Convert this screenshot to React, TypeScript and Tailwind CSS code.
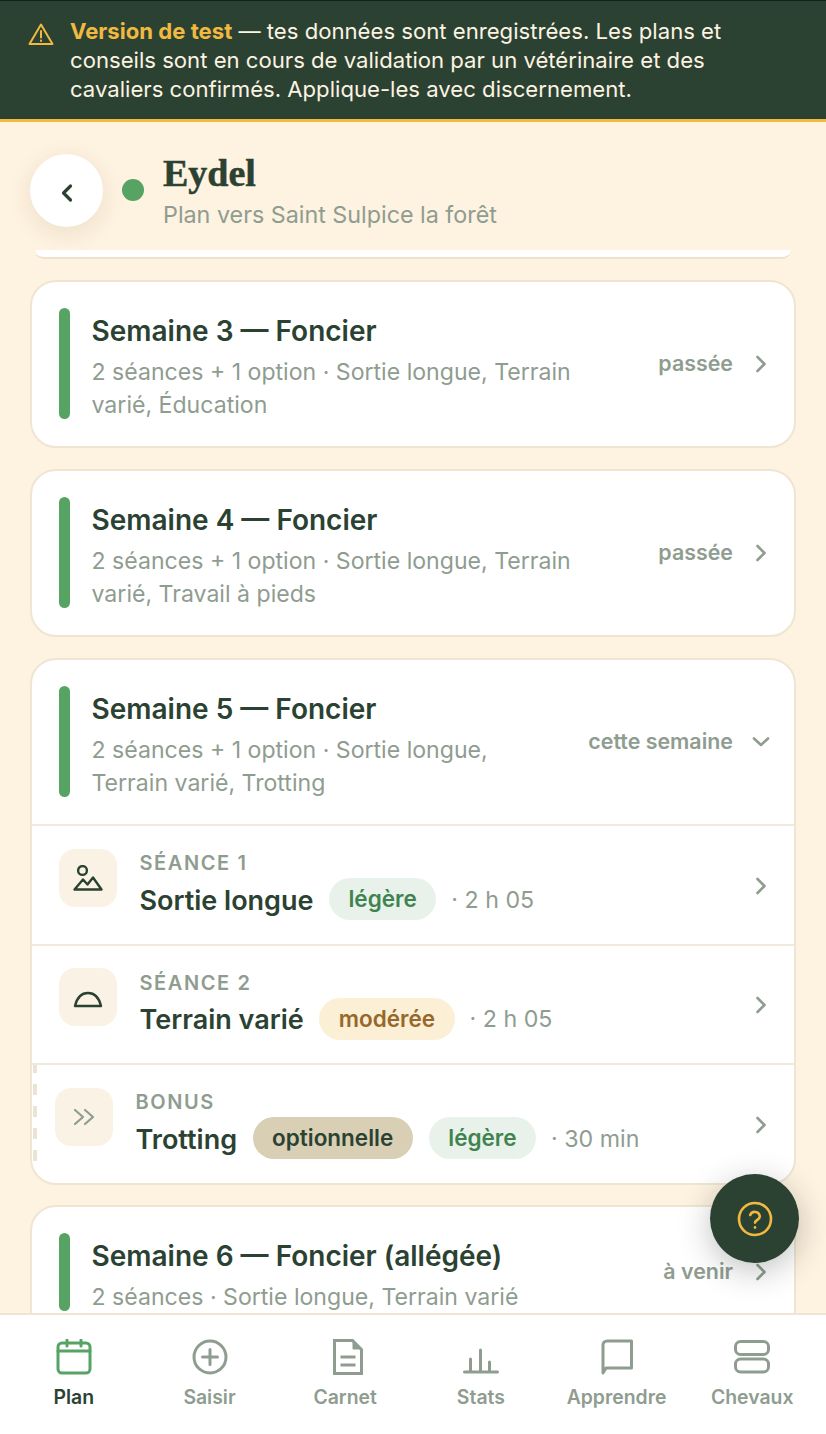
import React from "react";

function Chevron({ down = false, className = "" }: { down?: boolean; className?: string }) {
  return down ? (
    <svg className={className} width="20" height="20" viewBox="0 0 20 20" fill="none" stroke="#8f9c90" strokeWidth="2.6" strokeLinecap="round" strokeLinejoin="round"><path d="M3 6.5 10 13 17 6.5" /></svg>
  ) : (
    <svg className={className} width="20" height="20" viewBox="0 0 20 20" fill="none" stroke="#8f9c90" strokeWidth="2.6" strokeLinecap="round" strokeLinejoin="round"><path d="M6.5 3 13.5 10 6.5 17" /></svg>
  );
}

function WeekHeader({ title, sub, status, down = false }: { title: string; sub: React.ReactNode; status: string; down?: boolean }) {
  return (
    <div className="flex items-center pl-[27px] pr-[23px] pt-[26px] pb-[27px]">
      <div className="w-[11px] self-stretch rounded-full bg-[#57a364] shrink-0" />
      <div className="ml-[21.5px] flex-1 min-w-0 pt-[6px] -mb-[3px]">
        <div className="text-[28px] leading-[34px] font-semibold text-[#2b4232]">{title}</div>
        <div className="mt-[8px] text-[23.1px] leading-[33px] text-[#8f9c90]">{sub}</div>
      </div>
      <div className="text-[21.4px] font-semibold text-[#8f9c90] shrink-0 mr-[18px]">{status}</div>
      <Chevron down={down} />
    </div>
  );
}

function Pill({ children, tone }: { children: React.ReactNode; tone: "green" | "amber" | "tan" }) {
  const c = tone === "green" ? "bg-[#e8f2ea] text-[#3f8350]" : tone === "amber" ? "bg-[#fbefd6] text-[#96682a]" : "bg-[#d8cfb4] text-[#2b4232]";
  return <span className={`h-[42px] px-[19.5px] rounded-full flex items-center text-[22.5px] font-semibold ${c}`}>{children}</span>;
}

function Session({ icon, label, name, pills, time, bonus = false }: { icon: React.ReactNode; label: string; name: string; pills: React.ReactNode; time: string; bonus?: boolean }) {
  return (
    <div className="relative flex items-center h-[119.5px] border-t-2 border-[#f0eadc] pr-[23px]">
      {bonus && <div className="absolute left-[1px] top-0 h-[99px] w-[4px] bg-[repeating-linear-gradient(to_bottom,#ece4d2_-3px,#ece4d2_8px,transparent_8px,transparent_19px)]" />}
      <div className={`${bonus ? "ml-[23px]" : "ml-[27px]"} -mt-[14px] w-[58px] h-[58px] rounded-[16px] bg-[#faf3e5] flex items-center justify-center shrink-0`}>{icon}</div>
      <div className="ml-[22.5px] flex-1 min-w-0 pt-[1px]">
        <div className="text-[20px] leading-[26px] font-semibold tracking-[1.6px] text-[#8f9c90]">{label}</div>
        <div className="flex items-center mt-[2px] h-[42px]">
          <span className="text-[27px] font-semibold text-[#2b4232] mr-[15.5px] mt-[3px]">{name}</span>
          <span className="flex items-center gap-[16px]">{pills}</span>
          <span className="ml-[15px] text-[23.2px] text-[#8f9c90] mt-[2px]">· {time}</span>
        </div>
      </div>
      <Chevron className="mt-[2px]" />
    </div>
  );
}

function NavItem({ icon, label, active = false }: { icon: React.ReactNode; label: string; active?: boolean }) {
  return (
    <div className="flex-1 flex flex-col items-center pt-[23px]">
      <div className="h-[38px] flex items-center justify-center">{icon}</div>
      <div className={`mt-[8px] text-[19.4px] leading-[26px] font-semibold ${active ? "text-[#2b4232]" : "text-[#8f9c90]"}`}>{label}</div>
    </div>
  );
}

const navStroke = { fill: "none", stroke: "#8f9c90", strokeWidth: 3, strokeLinecap: "round" as const, strokeLinejoin: "round" as const };

const cardClass = "shrink-0 bg-white rounded-[26px] border-2 border-[#efe5d2] overflow-hidden";

export default function App() {
  return (
    <div className="relative h-[1434px] w-[826px] overflow-hidden flex flex-col bg-[#fef2e0] text-[#2b4232]" style={{ fontFamily: "Inter, 'Liberation Sans', sans-serif" }}>
      <div className="bg-[#2b4232] border-t border-[#14201a] border-b-[3px] border-b-[#f2b941] h-[122px] pl-[28px] pr-[60px] pt-[16px] flex shrink-0">
        <svg className="mt-[5px] shrink-0" width="26" height="24" viewBox="0 0 26 24" fill="none" stroke="#f2b941" strokeWidth="2" strokeLinejoin="round" strokeLinecap="round">
          <path d="M13 2.500 24.500 22H1.500Z" />
          <path d="M13 9v6.500" />
          <path d="M13 18.600v.4" />
        </svg>
        <p className="ml-[16px] text-[22.14px] leading-[29px] text-[#fdf3e2]">
          <b className="font-bold text-[#f2b941]">Version de test</b> — tes données sont enregistrées. Les plans et conseils sont en cours de validation par un vétérinaire et des cavaliers confirmés. Applique-les avec discernement.
        </p>
      </div>

      <div className="relative z-10 h-[128px] shrink-0 flex items-start pl-[30px] bg-[#fef2e0]">
        <div className="w-[73px] h-[73px] rounded-full bg-white shadow-[0_6px_24px_rgba(80,60,20,0.10)] flex items-center justify-center mt-[32px]">
          <svg className="mt-[5px]" width="14" height="20" viewBox="0 0 14 20" fill="none" stroke="#2b4232" strokeWidth="3.2" strokeLinecap="round" strokeLinejoin="round"><path d="M10.500 3 3.500 10l7 7" /></svg>
        </div>
        <div className="w-[22px] h-[22px] rounded-full bg-[#57a364] ml-[19px] mt-[57px]" />
        <div className="ml-[19px] mt-[28px]">
          <div className="text-[38px] leading-[46px] font-bold text-[#2b4232] [-webkit-text-stroke:0.5px_#2b4232]" style={{ fontFamily: "'Liberation Serif', serif" }}>Eydel</div>
          <div className="text-[23.3px] leading-[30px] mt-[4px] text-[#8f9c90]">Plan vers Saint Sulpice la forêt</div>
        </div>
      </div>

      <div className="flex-1 min-h-0 overflow-hidden px-[30px] flex flex-col gap-[21px]">
        <div className="shrink-0 h-[9px] mx-[5px] bg-white rounded-b-[14px] border-b-2 border-[#ede2cc]" />
        <div className={cardClass}>
          <WeekHeader title="Semaine 3 — Foncier" status="passée" sub={<>2 séances + 1 option · Sortie longue, Terrain<br />varié, Éducation</>} />
        </div>
        <div className={cardClass}>
          <WeekHeader title="Semaine 4 — Foncier" status="passée" sub={<>2 séances + 1 option · Sortie longue, Terrain<br />varié, Travail à pieds</>} />
        </div>
        <div className={cardClass}>
          <WeekHeader title="Semaine 5 — Foncier" status="cette semaine" down sub={<>2 séances + 1 option · Sortie longue,<br />Terrain varié, Trotting</>} />
          <Session label="SÉANCE 1" name="Sortie longue" time="2 h 05" pills={<Pill tone="green">légère</Pill>}
            icon={<svg width="30" height="26" viewBox="0 0 30 26" fill="none" stroke="#2b4232" strokeWidth="2.4" strokeLinejoin="round" strokeLinecap="round"><circle cx="9.500" cy="5.500" r="4.400" /><path d="M1.500 24.500 10 14.500l4.500 5L20 12.500l8.500 12z" /></svg>} />
          <Session label="SÉANCE 2" name="Terrain varié" time="2 h 05" pills={<Pill tone="amber">modérée</Pill>}
            icon={<svg className="mt-[3px]" width="30" height="18" viewBox="0 0 30 18" fill="none" stroke="#2b4232" strokeWidth="2.4" strokeLinejoin="round" strokeLinecap="round"><path d="M2 16h26C26 7.500 21 3 15 3S4 7.500 2 16z" /></svg>} />
          <Session bonus label="BONUS" name="Trotting" time="30 min" pills={<><Pill tone="tan">optionnelle</Pill><Pill tone="green">légère</Pill></>}
            icon={<svg width="22" height="18" viewBox="0 0 22 18" fill="none" stroke="#8f9c90" strokeWidth="2.2" strokeLinejoin="round" strokeLinecap="round"><path d="M2 2l8 7-8 7" /><path d="M12 2l8 7-8 7" /></svg>} />
        </div>
        <div className={`${cardClass} -mt-[1px]`}>
          <WeekHeader title="Semaine 6 — Foncier (allégée)" status="à venir" sub="2 séances · Sortie longue, Terrain varié" />
        </div>
      </div>

      <div className="absolute left-[710px] top-[1174px] z-20 w-[89px] h-[89px] rounded-full bg-[#2b4232] shadow-[0_8px_32px_rgba(30,40,30,0.28)] flex items-center justify-center">
        <svg width="36" height="36" viewBox="0 0 36 36" fill="none" stroke="#f2b941" strokeWidth="2.600" strokeLinecap="round" strokeLinejoin="round">
          <circle cx="18" cy="18" r="16" />
          <path d="M13.200 14a5 5 0 0 1 9.600 1.400c0 3.200-4.800 4-4.800 6.200" />
          <path d="M18 26.400v.2" />
        </svg>
      </div>

      <div className="relative z-10 h-[121px] shrink-0 bg-white border-t-2 border-[#efe5d2] flex px-[6px]">
        <NavItem active label="Plan" icon={<svg width="36" height="36" viewBox="0 0 36 36" fill="none" stroke="#57a364" strokeWidth="3" strokeLinecap="round" strokeLinejoin="round"><rect x="2" y="4" width="32" height="30" rx="4" /><path d="M2 12h32M11 1v6M25 1v6" /></svg>} />
        <NavItem label="Saisir" icon={<svg width="36" height="36" viewBox="0 0 36 36" {...navStroke}><circle cx="18" cy="18" r="16" /><path d="M18 10.500v15M10.500 18h15" /></svg>} />
        <NavItem label="Carnet" icon={<svg className="ml-[6px]" width="30" height="36" viewBox="0 0 30 36" fill="none" stroke="#8f9c90" strokeWidth="3" strokeLinejoin="miter"><path d="M1.500 1.500h18l9 9v24h-27z" /><path d="M20 2l8 8h-8z" fill="#8f9c90" strokeWidth="1" /><path d="M7.500 18h15M7.500 26h15" /></svg>} />
        <NavItem label="Stats" icon={<svg width="36" height="36" viewBox="0 0 36 36" {...navStroke}><path d="M1.500 33h33M7.500 32V20M17.500 32V11M26.500 32V23" /></svg>} />
        <NavItem label="Apprendre" icon={<svg width="32" height="36" viewBox="0 0 32 36" {...navStroke}><path d="M2 34V6a4 4 0 0 1 4-4h24.500v27H5z" /></svg>} />
        <NavItem label="Chevaux" icon={<svg width="36" height="34" viewBox="0 0 36 34" {...navStroke}><rect x="1.500" y="1.500" width="33" height="13" rx="5" /><rect x="1.500" y="19" width="33" height="13" rx="5" /></svg>} />
      </div>
    </div>
  );
}
